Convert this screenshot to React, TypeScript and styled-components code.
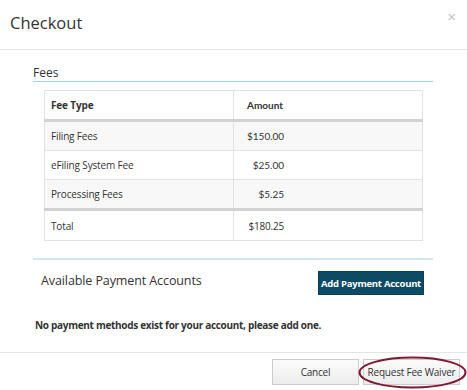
import styled, { createGlobalStyle } from 'styled-components';

const GlobalStyle = createGlobalStyle`
  body {
    margin: 0;
    background: #ffffff;
    font-family: 'Open Sans', 'Liberation Sans', sans-serif;
    color: #333333;
  }
`;

const Modal = styled.div`
  width: 467px;
  height: 390px;
  background: #ffffff;
  display: flex;
  flex-direction: column;
  overflow: hidden;
`;

const Header = styled.div`
  position: relative;
  box-sizing: border-box;
  height: 50px;
  padding: 12px 10px 0 10px;
  border-bottom: 1px solid #e5e5e5;
`;

const Title = styled.h4`
  margin: 0;
  font-size: 16.5px;
  font-weight: 400;
  line-height: 22px;
  color: #333333;
`;

const CloseButton = styled.span`
  position: absolute;
  top: 8px;
  right: 11px;
  font-size: 15px;
  color: #c4c4c4;
  font-family: 'Liberation Sans', sans-serif;
`;

const Body = styled.div`
  padding: 0 34px 0 33px;
  height: 303px;
  box-sizing: border-box;
  border-bottom: 1px solid #e5e5e5;
`;

const SectionTitle = styled.div`
  padding-top: 14px;
  font-size: 12px;
  line-height: 17px;
  border-bottom: 1px solid #9fd5e5;
`;

const FeeTable = styled.table`
  margin: 8px 10px 0 11px;
  width: calc(100% - 21px);
  border-collapse: collapse;
  font-size: 10px;
  letter-spacing: -0.15px;
  table-layout: fixed;
`;

const Cell = styled.td<{ $head?: boolean; $shade?: boolean; $thick?: 'top' | 'bottom'; $tall?: boolean }>`
  height: ${(p) => (p.$tall ? 29 : 28)}px;
  padding: 0 6px;
  border: 1px solid #e2e2e2;
  ${(p) => p.$thick === 'top' && 'border-top: 3px solid #d2d2d2;'}
  ${(p) => p.$thick === 'bottom' && 'border-bottom: 3px solid #d2d2d2;'}
  background: ${(p) => (p.$shade ? '#f8f8f8' : '#ffffff')};
  font-weight: ${(p) => (p.$head ? 700 : 400)};
  color: #333333;
  vertical-align: middle;
  white-space: nowrap;
`;

const AmountCell = styled(Cell)`
  padding-left: 13px;
  font-family: Lato, 'Open Sans', sans-serif;
  letter-spacing: 0;
`;

const Amount = styled.span<{ $plain?: boolean }>`
  display: inline-block;
  width: 37px;
  text-align: right;
  font-family: ${(p) => (p.$plain ? "'Open Sans', sans-serif" : 'Lato, sans-serif')};
  letter-spacing: ${(p) => (p.$plain ? '-0.2px' : '0')};
`;

const Divider = styled.div`
  margin-top: 17px;
  height: 2px;
  background: #cde9f2;
`;

const PaymentRow = styled.div`
  display: flex;
  justify-content: space-between;
  align-items: flex-start;
  padding: 11px 9px 0 8px;
`;

const PaymentTitle = styled.div`
  font-size: 12.5px;
  line-height: 18px;
  margin-top: 1px;
  letter-spacing: -0.1px;
  color: #333333;
`;

const PrimaryButton = styled.button`
  height: 24px;
  width: 106px;
  padding: 0;
  border: 1px solid #0a3f56;
  background: #0d4a64;
  color: #ffffff;
  font-family: 'Open Sans', sans-serif;
  font-weight: 700;
  font-size: 9.5px;
  letter-spacing: -0.25px;
  white-space: nowrap;
`;

const EmptyNote = styled.p`
  margin: 22px 0 0 2px;
  font-size: 10px;
  line-height: 16px;
  font-weight: 700;
  letter-spacing: -0.3px;
  color: #333333;
  white-space: nowrap;
`;

const Footer = styled.div`
  display: flex;
  justify-content: flex-end;
  gap: 4px;
  padding: 6px 7px 0 0;
`;

const FooterButton = styled.button<{ $width: number }>`
  position: relative;
  height: 26px;
  width: ${(p) => p.$width}px;
  padding: 0;
  border: 1px solid #cccccc;
  background: linear-gradient(#fbfbfb, #ececec);
  color: #333333;
  font-family: 'Open Sans', sans-serif;
  font-size: 10px;
  letter-spacing: -0.2px;
  white-space: nowrap;
`;

const Circle = styled.svg`
  position: absolute;
  left: -6px;
  top: -4px;
  overflow: visible;
`;

const fees = [
  { name: 'Filing Fees', amount: '$150.00' },
  { name: 'eFiling System Fee', amount: '$25.00' },
  { name: 'Processing Fees', amount: '$5.25' },
];

export default function App() {
  return (
    <Modal>
      <GlobalStyle />
      <Header>
        <Title>Checkout</Title>
        <CloseButton>×</CloseButton>
      </Header>
      <Body>
        <SectionTitle>Fees</SectionTitle>
        <FeeTable>
          <tbody>
            <tr>
              <Cell $head $thick="bottom">Fee Type</Cell>
              <AmountCell $head $thick="bottom">Amount</AmountCell>
            </tr>
            {fees.map((fee, i) => (
              <tr key={fee.name}>
                <Cell $shade={i % 2 === 0} $thick={i === fees.length - 1 ? 'bottom' : undefined}>
                  {fee.name}
                </Cell>
                <AmountCell $shade={i % 2 === 0} $thick={i === fees.length - 1 ? 'bottom' : undefined}>
                  <Amount>{fee.amount}</Amount>
                </AmountCell>
              </tr>
            ))}
            <tr>
              <Cell $tall>Total</Cell>
              <AmountCell $tall>
                <Amount $plain>$180.25</Amount>
              </AmountCell>
            </tr>
          </tbody>
        </FeeTable>
        <Divider />
        <PaymentRow>
          <PaymentTitle>Available Payment Accounts</PaymentTitle>
          <PrimaryButton>Add Payment Account</PrimaryButton>
        </PaymentRow>
        <EmptyNote>No payment methods exist for your account, please add one.</EmptyNote>
      </Body>
      <Footer>
        <FooterButton $width={87}>Cancel</FooterButton>
        <FooterButton $width={97}>
          Request Fee Waiver
          <Circle width="109" height="33" viewBox="0 0 109 33">
            <ellipse cx="54.5" cy="16.5" rx="53" ry="15" fill="none" stroke="#821633" strokeWidth="2" />
          </Circle>
        </FooterButton>
      </Footer>
    </Modal>
  );
}
